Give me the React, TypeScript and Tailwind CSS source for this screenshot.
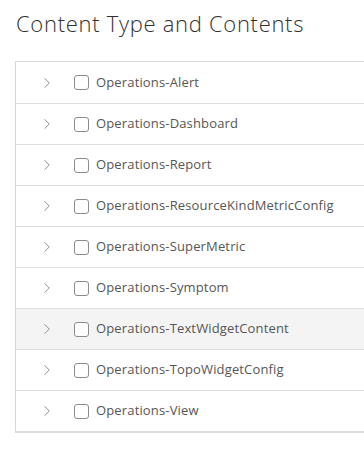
import { ChevronRight } from 'lucide-react'

const items = [
    'Operations-Alert',
    'Operations-Dashboard',
    'Operations-Report',
    'Operations-ResourceKindMetricConfig',
    'Operations-SuperMetric',
    'Operations-Symptom',
    'Operations-TextWidgetContent',
    'Operations-TopoWidgetConfig',
    'Operations-View',
]

export default function App() {
    return (
        <div className="w-[364px] h-[455px] overflow-hidden bg-white" style={{ fontFamily: '"Open Sans", "Liberation Sans", sans-serif' }}>
            {/* Header */}
            <h2 className="pl-4 pt-[9px] text-[22px] leading-[28px] font-light tracking-[0.7px] text-[#313131]">Content Type and Contents</h2>

            {/* Tree list */}
            <div className="ml-[15px] mt-[24px] w-[380px] border border-[#d7d7d7] border-b-2 border-b-[#dcdcdc]">
                {items.map((item, i) => (
                    <div
                        key={item}
                        className={`h-[41px] flex items-center ${i > 0 ? 'border-t border-[#dedede]' : ''} ${item === 'Operations-TextWidgetContent' ? 'bg-[#f4f4f4]' : ''}`}
                    >
                        <ChevronRight size={18} strokeWidth={1.3} className="ml-[22px] text-[#8c8c8c]" />
                        <div className="ml-[18px] w-[15px] h-[15px] rounded-[3px] border border-[#8c8c8c] bg-white" />
                        <span className="ml-[7px] text-[13px] tracking-[0.15px] text-[#565656]">{item}</span>
                    </div>
                ))}
            </div>
        </div>
    )
}
